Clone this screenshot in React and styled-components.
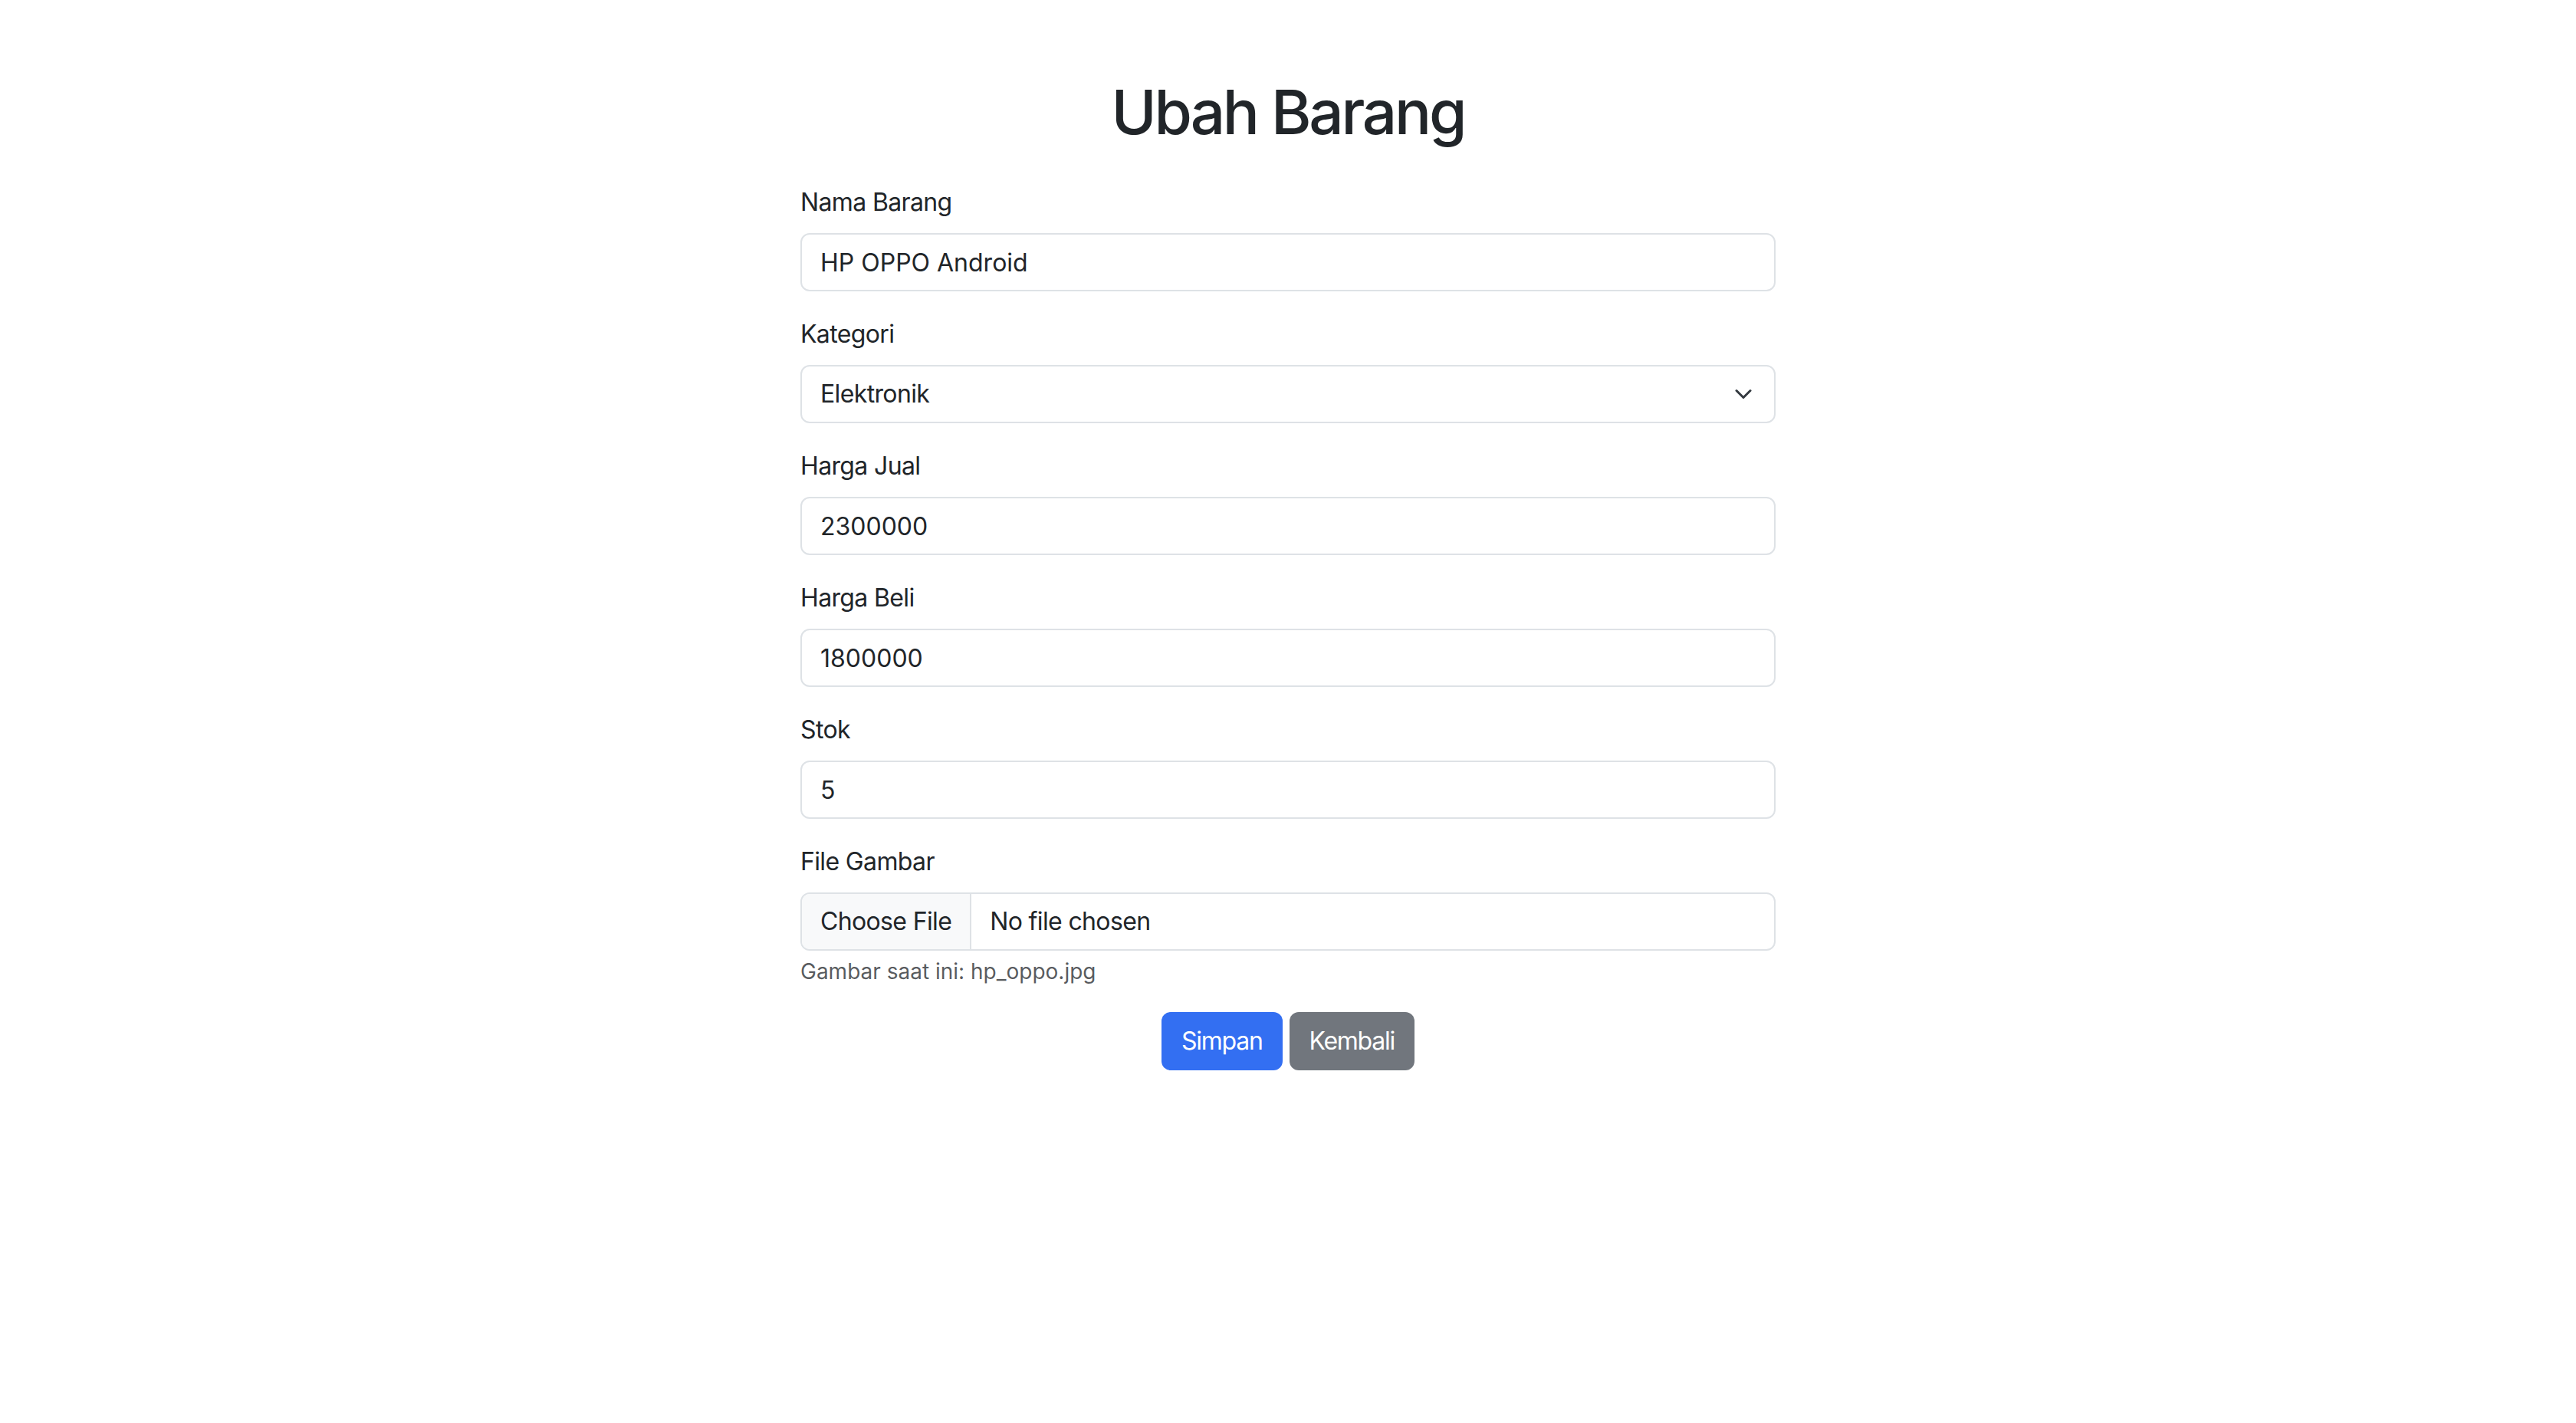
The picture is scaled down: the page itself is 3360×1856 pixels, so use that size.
import React from 'react';
import styled, { createGlobalStyle } from 'styled-components';

const fields = [
  { id: 'nama', label: 'Nama Barang', value: 'HP OPPO Android' },
  { id: 'kategori', label: 'Kategori', value: 'Elektronik', select: true },
  { id: 'jual', label: 'Harga Jual', value: '2300000' },
  { id: 'beli', label: 'Harga Beli', value: '1800000' },
  { id: 'stok', label: 'Stok', value: '5' },
];

const GlobalStyle = createGlobalStyle`
  * { box-sizing: border-box; }
  body {
    margin: 0;
    background: #fff;
    color: #212529;
    font-family: Inter, "Liberation Sans", sans-serif;
    font-size: 32px;
    line-height: 1.5;
    letter-spacing: -0.02em;
  }
`;

// bootstrap's select arrow, 16x16 path squeezed into a 16x12 box
const Chevron = () => (
  <svg width="32" height="24" viewBox="0 0 16 16" fill="none">
    <path
      d="m2 5 6 6 6-6"
      stroke="#343a40"
      strokeWidth="2"
      strokeLinecap="round"
      strokeLinejoin="round"
    />
  </svg>
);

export default function App() {
  return (
    <>
      <GlobalStyle />
      <Page>
        <Title>Ubah Barang</Title>
        <form onSubmit={e => e.preventDefault()}>
          {fields.map(f => (
            <Group key={f.id}>
              <Label htmlFor={f.id}>{f.label}</Label>
              {f.select ? (
                <SelectBox id={f.id}>
                  <span>{f.value}</span>
                  <Chevron />
                </SelectBox>
              ) : (
                <Input id={f.id} defaultValue={f.value} />
              )}
            </Group>
          ))}
          <Group>
            <Label htmlFor="gambar">File Gambar</Label>
            <FileField>
              <HiddenInput id="gambar" type="file" />
              <FileButton>Choose File</FileButton>
              <FileName>No file chosen</FileName>
            </FileField>
            <Help>Gambar saat ini: hp_oppo.jpg</Help>
          </Group>
          <Actions>
            <Button type="submit" variant="primary">Simpan</Button>
            <Button type="button" variant="secondary">Kembali</Button>
          </Actions>
        </form>
      </Page>
    </>
  );
}

const Page = styled.div`
  width: 1272px;
  margin: 98px auto 0;
`;

const Title = styled.h1`
  margin: 0 0 46px;
  text-align: center;
  font-size: 80px;
  font-weight: 500;
  line-height: 1.2;
  letter-spacing: -0.04em;
`;

const Group = styled.div`
  margin-bottom: 32px;
`;

const Label = styled.label`
  display: block;
  margin-bottom: 16px;
`;

const fieldBase = `
  display: flex;
  align-items: center;
  width: 100%;
  height: 76px;
  border: 2px solid #dee2e6;
  border-radius: 12px;
  background: #fff;
  color: #212529;
  font: inherit;
`;

const Input = styled.input`
  ${fieldBase}
  padding: 12px 24px;
  outline: none;
`;

const SelectBox = styled.div`
  ${fieldBase}
  padding: 12px 24px;
  justify-content: space-between;
  cursor: pointer;
`;

const FileField = styled.label`
  ${fieldBase}
  overflow: hidden;
  cursor: pointer;
`;

const HiddenInput = styled.input`
  display: none;
`;

const FileButton = styled.span`
  align-self: stretch;
  display: flex;
  align-items: center;
  padding: 0 24px;
  background: #f8f9fa;
  border-right: 2px solid #dee2e6;
`;

const FileName = styled.span`
  padding-left: 24px;
`;

const Help = styled.div`
  margin-top: 6px;
  font-size: 28px;
  letter-spacing: 0;
  color: rgba(33, 37, 41, 0.75);
`;

const Actions = styled.div`
  display: flex;
  justify-content: center;
  gap: 9px;
`;

const Button = styled.button`
  height: 76px;
  padding: 12px 24px;
  border: 2px solid transparent;
  border-radius: 12px;
  font: inherit;
  letter-spacing: -0.04em;
  color: #fff;
  cursor: pointer;
  background: ${p => (p.variant === 'primary' ? '#336ff2' : '#71767d')};
`;
